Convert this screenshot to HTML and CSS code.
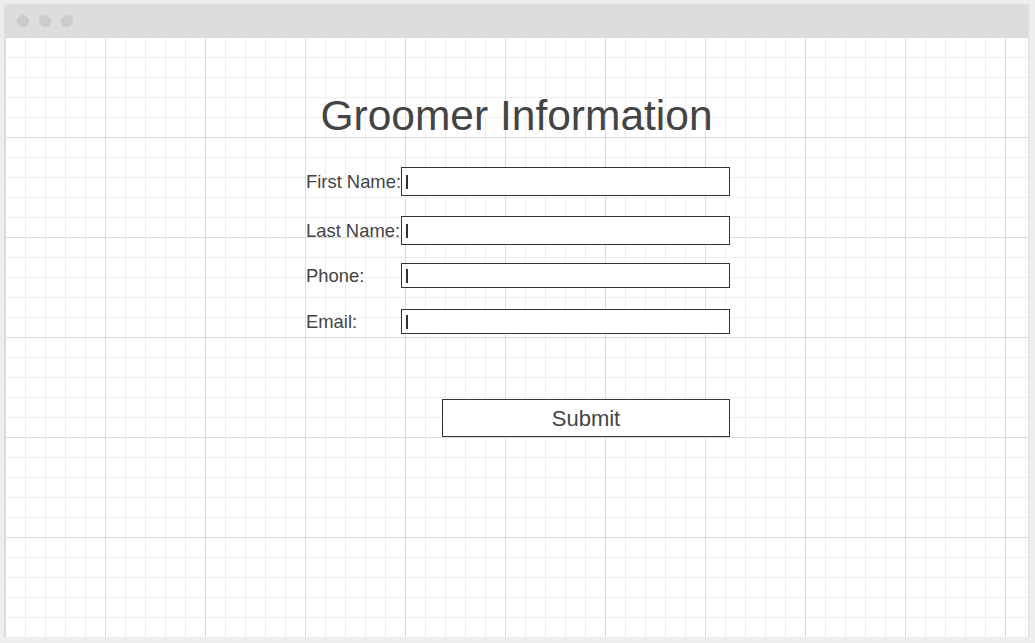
FILE: index.html
```html
<!DOCTYPE html>
<html lang="en">
<head>
<meta charset="utf-8">
<title>Groomer Information</title>
<link rel="stylesheet" href="styles.css">
</head>
<body>
<div class="window">
  <div class="titlebar">
    <span class="dot"></span><span class="dot"></span><span class="dot"></span>
  </div>
  <div class="canvas">
    <h1 class="title">Groomer Information</h1>
    <div class="form">
      <div class="row row-1">
        <span class="label">First Name:</span>
        <div class="field tall"><span class="caret"></span></div>
      </div>
      <div class="row row-2">
        <span class="label">Last Name:</span>
        <div class="field tall"><span class="caret"></span></div>
      </div>
      <div class="row row-3">
        <span class="label">Phone:</span>
        <div class="field short"><span class="caret"></span></div>
      </div>
      <div class="row row-4">
        <span class="label">Email:</span>
        <div class="field short"><span class="caret"></span></div>
      </div>
      <div class="actions">
        <div class="submit">Submit</div>
      </div>
    </div>
  </div>
</div>
</body>
</html>
```

FILE: styles.css
```css
html, body {
  margin: 0;
  padding: 0;
}
body {
  background: #eeeeee;
  padding: 5px 0 0 5px;
  font-family: "Liberation Sans", Arial, sans-serif;
  color: #444444;
}
.window {
  width: 1023px;
  height: 632px;
  display: flex;
  flex-direction: column;
  background: #ffffff;
  box-shadow: 0 0 2px rgba(0, 0, 0, 0.18);
}
.titlebar {
  height: 32px;
  flex: 0 0 32px;
  background: #dddddd;
  display: flex;
  align-items: center;
  gap: 10px;
  padding-left: 12px;
}
.dot {
  width: 12px;
  height: 12px;
  border-radius: 50%;
  background: #cbcbcb;
}
.canvas {
  flex: 1;
  display: flex;
  flex-direction: column;
  align-items: center;
  background-color: #ffffff;
  background-image:
    linear-gradient(to right, #dcdcdc 1px, transparent 1px),
    linear-gradient(to bottom, #dcdcdc 1px, transparent 1px),
    linear-gradient(to right, #eeeeee 1px, transparent 1px),
    linear-gradient(to bottom, #eeeeee 1px, transparent 1px);
  background-size: 100px 100px, 100px 100px, 20px 20px, 20px 20px;
}
.title {
  margin: 58px 0 0 0;
  font-size: 42.5px;
  line-height: 42px;
  font-weight: normal;
  color: #444444;
}
.form {
  align-self: flex-start;
  margin-left: 301px;
  width: 424px;
  display: flex;
  flex-direction: column;
}
.row {
  display: flex;
  align-items: center;
}
.row-1 { margin-top: 30px; }
.row-2 { margin-top: 20px; }
.row-3 { margin-top: 18px; }
.row-4 { margin-top: 21px; }
.label {
  width: 95px;
  font-size: 18.4px;
  line-height: 18px;
  white-space: nowrap;
}
.field {
  box-sizing: border-box;
  width: 329px;
  border: 1px solid #333333;
  background: #ffffff;
  display: flex;
  align-items: center;
  padding-left: 4px;
}
.field.tall { height: 29px; }
.field.short { height: 25px; }
.caret {
  width: 2px;
  height: 14px;
  background: #333333;
}
.actions {
  margin-top: 65px;
  padding-left: 136px;
}
.submit {
  box-sizing: border-box;
  width: 288px;
  height: 38px;
  border: 1px solid #333333;
  background: #ffffff;
  display: flex;
  align-items: center;
  justify-content: center;
  padding-top: 1px;
  font-size: 22px;
  color: #444444;
}
```
